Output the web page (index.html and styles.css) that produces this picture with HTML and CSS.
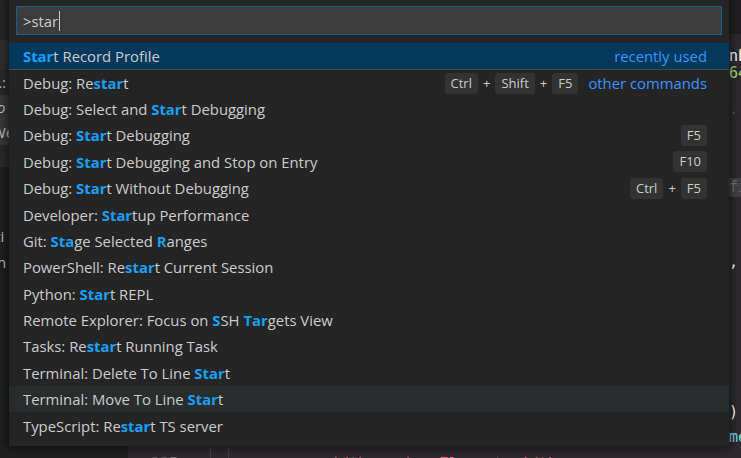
FILE: index.html
```html
<!DOCTYPE html>
<html>
<head>
<meta charset="utf-8">
<link rel="stylesheet" href="styles.css">
</head>
<body>
<div class="workbench">
  <aside class="sidebar">
    <div class="sb-top"></div>
    <div class="sb-band"></div>
    <div class="sb-item">r.:</div>
    <div class="sb-item sb-sel ital">to</div>
    <div class="sb-item sb-sel">We</div>
    <div class="sb-gap"></div>
    <div class="sb-lower">
      <div class="sb-line l1">cti</div>
      <div class="sb-line">on</div>
      <div class="sb-line l3">s</div>
      <div class="sb-line l4">d</div>
    </div>
  </aside>
  <main class="editor">
    <div class="tabbar"><span class="tab-glyph">e</span></div>
    <div class="code">
      <div class="gap g13"></div>
      <div class="ln"><span class="c-w">nb</span></div>
      <div class="ln short"><span class="c-g">64</span></div>
      <div class="gap g24"></div>
      <div class="ln"><span class="c-dot">·</span><span class="c-r">i</span></div>
      <div class="gap g55"></div>
      <div class="ln hint-row"><span class="hint">fi</span></div>
      <div class="gap g56"></div>
      <div class="ln"><span class="c-w">, </span></div>
      <div class="gap g131"></div>
      <div class="ln"><span class="c-w">) :</span></div>
      <div class="gap g6"></div>
      <div class="ln"><span class="c-b">me</span></div>
      <div class="ln last">
        <span class="gutter">235</span><span class="guide"></span><span class="guide"></span><span class="c-r code-last">width = size.Element.width</span>
      </div>
    </div>
  </main>

  <div class="palette">
    <div class="input-wrap">
      <div class="input"><span>&gt;star</span><span class="caret"></span></div>
    </div>
    <div class="list">
      <div class="row sel"><span><b class="hl">Star</b>t Record Profile</span><span class="desc">recently used</span></div>
      <div class="row sep"><span>Debug: Re<b class="hl">star</b>t</span>
        <span class="keys"><span class="key">Ctrl</span><span class="plus">+</span><span class="key">Shift</span><span class="plus">+</span><span class="key">F5</span></span>
        <span class="desc other">other commands</span></div>
      <div class="row"><span>Debug: Select and <b class="hl">Star</b>t Debugging</span></div>
      <div class="row"><span>Debug: <b class="hl">Star</b>t Debugging</span><span class="keys"><span class="key">F5</span></span></div>
      <div class="row"><span>Debug: <b class="hl">Star</b>t Debugging and Stop on Entry</span><span class="keys"><span class="key">F10</span></span></div>
      <div class="row"><span>Debug: <b class="hl">Star</b>t Without Debugging</span><span class="keys"><span class="key">Ctrl</span><span class="plus">+</span><span class="key">F5</span></span></div>
      <div class="row"><span>Developer: <b class="hl">Star</b>tup Performance</span></div>
      <div class="row"><span>Git: <b class="hl">Sta</b>ge Selected <b class="hl">R</b>anges</span></div>
      <div class="row"><span>PowerShell: Re<b class="hl">star</b>t Current Session</span></div>
      <div class="row"><span>Python: <b class="hl">Star</b>t REPL</span></div>
      <div class="row"><span>Remote Explorer: Focus on <b class="hl">S</b>SH <b class="hl">Tar</b>gets View</span></div>
      <div class="row"><span>Tasks: Re<b class="hl">star</b>t Running Task</span></div>
      <div class="row"><span>Terminal: Delete To Line <b class="hl">Star</b>t</span></div>
      <div class="row hover"><span>Terminal: Move To Line <b class="hl">Star</b>t</span></div>
      <div class="row"><span>TypeScript: Re<b class="hl">star</b>t TS server</span></div>
    </div>
  </div>
</div>
</body>
</html>
```

FILE: styles.css
```css
html, body {
  margin: 0;
  padding: 0;
}
body {
  width: 741px;
  height: 458px;
  overflow: hidden;
  background: #2d2a2e;
  font-family: "Open Sans", "Noto Sans", sans-serif;
}
.workbench {
  position: relative;
  width: 741px;
  height: 458px;
  display: flex;
}

/* sidebar underneath */
.sidebar {
  width: 128px;
  flex: none;
  background: #232323;
  display: flex;
  flex-direction: column;
  color: #bdbdbd;
  font-size: 15px;
}
.sb-top { height: 40px; background: #262626; }
.sb-band { height: 30px; background: #303030; }
.sb-item {
  height: 25px;
  line-height: 25px;
  background: #2a2a2a;
  text-indent: -8px;
}
.sb-sel { background: #383838; }
.ital { font-style: italic; }
.sb-gap { height: 22px; background: #2b2b2b; }
.sb-lower { flex: 1; background: #1f1f1f; }
.sb-line { height: 26px; line-height: 26px; text-indent: -12px; }
.l1 { margin-top: 56px; }
.l3 { margin-top: 27px; }
.l4 { margin-top: 28px; }

/* editor underneath */
.editor {
  flex: 1;
  display: flex;
  flex-direction: column;
  background: #2d2a2e;
}
.tabbar {
  height: 34px;
  flex: none;
  background: #221f22;
  display: flex;
  justify-content: flex-end;
  align-items: center;
  color: #c1c0c0;
  font-family: "DejaVu Sans Mono", monospace;
  font-size: 15px;
}
.tab-glyph { margin-right: -5px; }
.code {
  padding-left: 601px;
  font-family: "DejaVu Sans Mono", monospace;
  font-size: 15px;
  white-space: nowrap;
}
.gap { height: 10px; }
.g6 { height: 6px; }
.g13 { height: 13px; }
.g24 { height: 24px; }
.g55 { height: 55px; }
.g56 { height: 56px; }
.g131 { height: 131px; }
.ln { height: 19px; line-height: 19px; }
.short { height: 14px; line-height: 14px; }
.c-w { color: #fcfcfa; }
.c-g { color: #a9dc76; }
.c-r { color: #ff6188; }
.c-b { color: #78dce8; }
.c-dot { color: #5b595c; margin-right: 2px; }
.hint-row { background: #403e41; }
.hint { color: #727072; }
.last {
  margin-left: -601px;
  display: flex;
  align-items: flex-start;
  height: 30px;
  line-height: 20px;
}
.last .gutter, .last .code-last { margin-top: 7px; }
.gutter { color: #6e6c6f; margin-left: 23px; width: 59px; }
.guide { width: 1px; height: 20px; background: #403e41; margin-right: 17px; }
.code-last { margin-left: 76px; }

/* command palette overlay */
.palette {
  position: absolute;
  left: 9px;
  top: 0;
  width: 720px;
  background: #252526;
  box-shadow: 0 0 8px 2px rgba(0, 0, 0, 0.55);
  padding-bottom: 7px;
  color: #cccccc;
  font-size: 14.85px;
}
.input-wrap { padding: 6px 7px 8px; }
.input {
  height: 29px;
  box-sizing: border-box;
  border: 1px solid #1a5f92;
  background: #3c3c3c;
  padding-left: 6px;
  display: flex;
  align-items: center;
  color: #cccccc;
}
.caret {
  width: 1px;
  height: 20px;
  background: #cccccc;
  margin-left: 1px;
}
.row {
  height: 26.4px;
  box-sizing: border-box;
  display: flex;
  align-items: center;
  padding: 0 22px 0 14px;
  white-space: nowrap;
}
.row.sel { background: #04395e; }
.row.sep { border-top: 1px solid #4a4a4a; }
.row.hover { background: #2a2d2e; }
.hl { color: #18a0fb; font-weight: 700; }
.desc { margin-left: auto; color: #3794ff; }
.desc.other { margin-left: 10px; }
.keys {
  margin-left: auto;
  display: flex;
  align-items: center;
  font-size: 13px;
}
.key {
  height: 21px;
  line-height: 21px;
  padding: 0 6px;
  background: #333333;
  border-radius: 3px;
  color: #cccccc;
}
.plus { margin: 0 5px; }
```
